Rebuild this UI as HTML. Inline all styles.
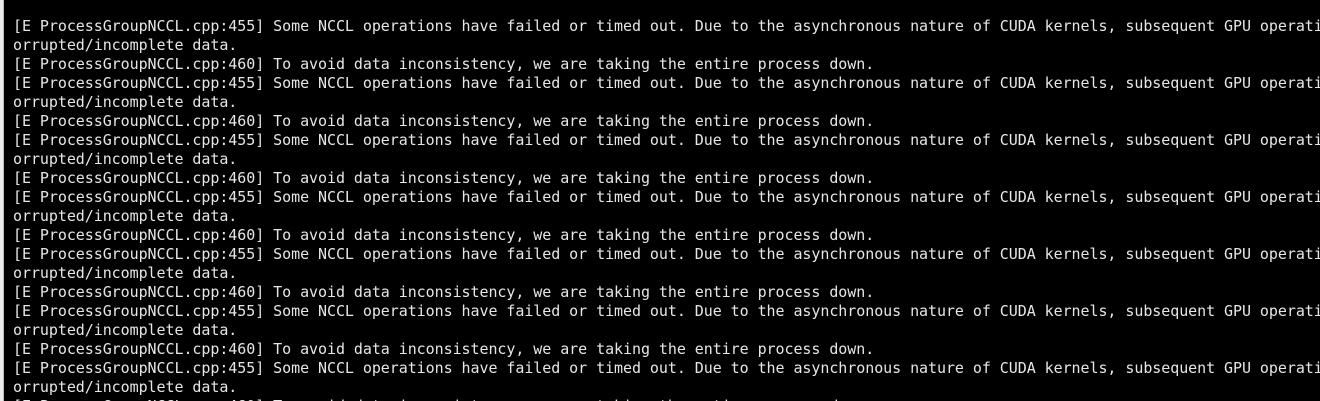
<!DOCTYPE html>
<html><head><meta charset="utf-8"><style>
html,body{margin:0;padding:0;background:#000;width:1320px;height:401px;overflow:hidden;position:relative}
.strip{position:absolute;left:0;top:0;width:3px;height:401px;background:#ececec;border-right:1px solid #bcbcbc}
.wrap{position:absolute;left:13px;top:0;width:1307px;height:401px;overflow:hidden}
pre{position:absolute;left:0;top:17px;margin:0;font-family:"DejaVu Sans Mono","Liberation Mono",monospace;font-size:15px;letter-spacing:-0.06px;line-height:19px;color:#e6e6e6;white-space:pre}
</style></head><body><div class="strip"></div><div class="wrap"><pre>[E ProcessGroupNCCL.cpp:455] Some NCCL operations have failed or timed out. Due to the asynchronous nature of CUDA kernels, subsequent GPU operations might run on c
orrupted/incomplete data.
[E ProcessGroupNCCL.cpp:460] To avoid data inconsistency, we are taking the entire process down.
[E ProcessGroupNCCL.cpp:455] Some NCCL operations have failed or timed out. Due to the asynchronous nature of CUDA kernels, subsequent GPU operations might run on c
orrupted/incomplete data.
[E ProcessGroupNCCL.cpp:460] To avoid data inconsistency, we are taking the entire process down.
[E ProcessGroupNCCL.cpp:455] Some NCCL operations have failed or timed out. Due to the asynchronous nature of CUDA kernels, subsequent GPU operations might run on c
orrupted/incomplete data.
[E ProcessGroupNCCL.cpp:460] To avoid data inconsistency, we are taking the entire process down.
[E ProcessGroupNCCL.cpp:455] Some NCCL operations have failed or timed out. Due to the asynchronous nature of CUDA kernels, subsequent GPU operations might run on c
orrupted/incomplete data.
[E ProcessGroupNCCL.cpp:460] To avoid data inconsistency, we are taking the entire process down.
[E ProcessGroupNCCL.cpp:455] Some NCCL operations have failed or timed out. Due to the asynchronous nature of CUDA kernels, subsequent GPU operations might run on c
orrupted/incomplete data.
[E ProcessGroupNCCL.cpp:460] To avoid data inconsistency, we are taking the entire process down.
[E ProcessGroupNCCL.cpp:455] Some NCCL operations have failed or timed out. Due to the asynchronous nature of CUDA kernels, subsequent GPU operations might run on c
orrupted/incomplete data.
[E ProcessGroupNCCL.cpp:460] To avoid data inconsistency, we are taking the entire process down.
[E ProcessGroupNCCL.cpp:455] Some NCCL operations have failed or timed out. Due to the asynchronous nature of CUDA kernels, subsequent GPU operations might run on c
orrupted/incomplete data.
[E ProcessGroupNCCL.cpp:460] To avoid data inconsistency, we are taking the entire process down.
</pre></div></body></html>
